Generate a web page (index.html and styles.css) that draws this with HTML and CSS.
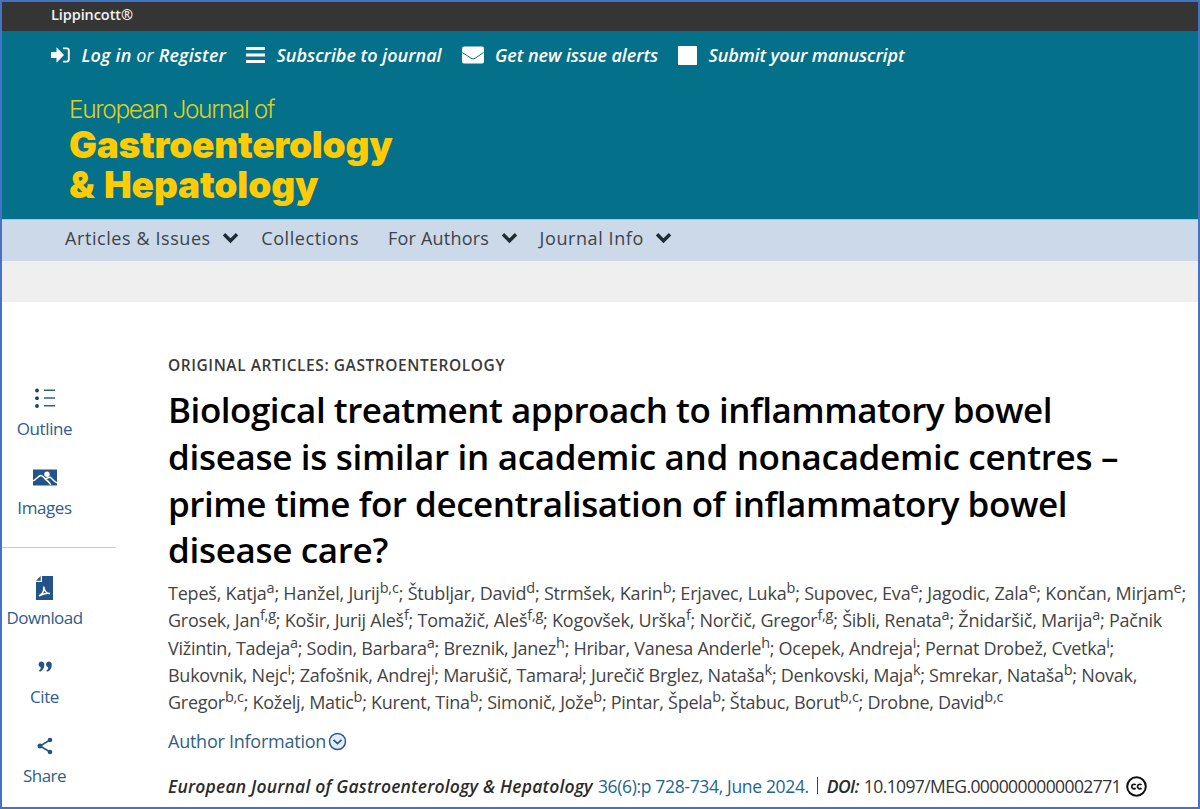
FILE: index.html
```html
<!DOCTYPE html>
<html lang="en">
<head>
    <meta charset="UTF-8">
    <meta name="viewport" content="width=device-width, initial-scale=1.0">
    <title>European Journal of Gastroenterology &amp; Hepatology</title>
    <link rel="stylesheet" href="styles.css">
</head>
<body>
    <div class="page">
        <div class="topbar">Lippincott®</div>

        <header class="masthead">
            <div class="quick-links">
                <a class="quick-link">
                    <svg width="19" height="16" viewBox="0 0 19 16"><path d="M0 5h5.500V.3L13 8l-7.500 7.700V11H0z" fill="#fff"/><path d="M12 1.400h3.800a2 2 0 0 1 2 2v9.200a2 2 0 0 1-2 2H12" fill="none" stroke="#fff" stroke-width="1.900"/></svg>
                    <span class="login"><b>Log in</b> or <b>Register</b></span>
                </a>
                <a class="quick-link">
                    <svg width="19" height="16" viewBox="0 0 19 16"><path d="M0 0h19v3H0zM0 6.500h19v3H0zM0 13h19v3H0z" fill="#fff"/></svg>
                    <b>Subscribe to journal</b>
                </a>
                <a class="quick-link">
                    <svg width="22" height="18" viewBox="0 0 22 18"><rect y=".5" width="22" height="17" rx="2" fill="#fff"/><path d="M.5 6.500L9 12.300q2 1.300 4 0l8.500-5.800" fill="none" stroke="#04708a" stroke-width="1"/></svg>
                    <b class="alerts">Get new issue alerts</b>
                </a>
                <a class="quick-link">
                    <svg width="19" height="19" viewBox="0 0 19 19"><path d="M0 0h19v19H0z" fill="#fff"/></svg>
                    <b class="submit">Submit your manuscript</b>
                </a>
            </div>
            <div class="logo">
                <div class="logo-small">European Journal of</div>
                <div class="logo-big">Gastroenterology</div>
                <div class="logo-big second">&amp; Hepatology</div>
            </div>
        </header>

        <nav class="menu">
            <a class="menu-item">Articles &amp; Issues <svg width="17" height="12" viewBox="0 0 17 12"><path d="M2 2.200l6.500 6.600L15 2.200" fill="none" stroke="#222b33" stroke-width="3.400"/></svg></a>
            <a class="menu-item collections">Collections</a>
            <a class="menu-item for-authors">For Authors <svg width="17" height="12" viewBox="0 0 17 12"><path d="M2 2.200l6.500 6.600L15 2.200" fill="none" stroke="#222b33" stroke-width="3.400"/></svg></a>
            <a class="menu-item">Journal Info <svg width="17" height="12" viewBox="0 0 17 12"><path d="M2 2.200l6.500 6.600L15 2.200" fill="none" stroke="#222b33" stroke-width="3.400"/></svg></a>
        </nav>
        <div class="strip"></div>

        <div class="content">
            <aside class="tools">
                <div class="tool-group">
                    <a class="tool">
                        <svg width="22" height="22" viewBox="0 0 22 22"><g fill="#16406f"><circle cx="3" cy="3.500" r="1.900"/><circle cx="3" cy="11.200" r="1.900"/><circle cx="3" cy="19" r="1.900"/></g><path d="M10 3.300h11M10 11h11M10 18.700h11" stroke="#2c5f93" stroke-width="1.600"/></svg>
                        Outline
                    </a>
                    <a class="tool images">
                        <svg width="24" height="22" viewBox="0 0 24 22"><path d="M0 3.500h24v16H0z" fill="#235489"/><circle cx="14" cy="8.300" r="2.700" fill="#fff"/><path d="M0 14.800c3-.8 5-4.800 7.500-5.300S11.500 13 14 14.500s2 3 4 4.500M12.500 12.800c2.200-.3 2.800-2 4.500-1.500s4 4.500 7 5.500" fill="none" stroke="#fff" stroke-width="1.500"/></svg>
                        Images
                    </a>
                </div>
                <div class="tool-group">
                    <a class="tool download">
                        <svg width="17" height="24" viewBox="0 0 17 24"><path d="M6 0h11v24H0V6h6z" fill="#235489"/><path d="M0 4.700L4.700 0v4.700z" fill="#235489"/><path d="M3 20c3-1.500 5.200-5 4.800-9.500.4 4.500 2.700 7 6.200 7-3.500-1-7 .2-11 2.500z" fill="none" stroke="#fff" stroke-width="1.400"/></svg>
                        Download
                    </a>
                    <a class="tool cite">
                        <svg width="14" height="22" viewBox="0 0 14 22"><g fill="#235489"><path d="M3.200 6.500a3 3 0 0 1 3.100 3.300c0 3.600-1.800 6-4.400 7l-1-1.200c1.200-.8 1.900-1.900 1.900-3.200a3 3 0 0 1 .4-5.900z"/><path d="M10.700 6.500a3 3 0 0 1 3.100 3.300c0 3.600-1.800 6-4.400 7l-1-1.200c1.200-.8 1.900-1.900 1.900-3.200a3 3 0 0 1 .4-5.900z"/></g></svg>
                        Cite
                    </a>
                    <a class="tool share">
                        <svg width="16" height="22" viewBox="0 0 16 22"><path d="M13 6L3 12l10 6" fill="none" stroke="#235489" stroke-width="1.600"/><g fill="#235489"><circle cx="13" cy="6" r="2.300"/><circle cx="3" cy="12" r="2.500"/><circle cx="13" cy="18" r="2.300"/></g></svg>
                        Share
                    </a>
                </div>
            </aside>

            <main class="article">
                <div class="section-name">ORIGINAL ARTICLES: GASTROENTEROLOGY</div>
                <h1>
                    <span class="line title-1">Biological treatment approach to inflammatory bowel</span>
                    <span class="line title-2">disease is similar in academic and nonacademic centres –</span>
                    <span class="line title-3">prime time for decentralisation of inflammatory bowel</span>
                    <span class="line title-4">disease care?</span>
                </h1>
                <div class="authors">
                    <div class="line authors-1">Tepeš, Katja<sup>a</sup>; Hanžel, Jurij<sup>b,c</sup>; Štubljar, David<sup>d</sup>; Strmšek, Karin<sup>b</sup>; Erjavec, Luka<sup>b</sup>; Supovec, Eva<sup>e</sup>; Jagodic, Zala<sup>e</sup>; Končan, Mirjam<sup>e</sup>;</div>
                    <div class="line authors-2">Grosek, Jan<sup>f,g</sup>; Košir, Jurij Aleš<sup>f</sup>; Tomažič, Aleš<sup>f,g</sup>; Kogovšek, Urška<sup>f</sup>; Norčič, Gregor<sup>f,g</sup>; Šibli, Renata<sup>a</sup>; Žnidaršič, Marija<sup>a</sup>; Pačnik</div>
                    <div class="line">Vižintin, Tadeja<sup>a</sup>; Sodin, Barbara<sup>a</sup>; Breznik, Janez<sup>h</sup>; Hribar, Vanesa Anderle<sup>h</sup>; Ocepek, Andreja<sup>i</sup>; Pernat Drobež, Cvetka<sup>i</sup>;</div>
                    <div class="line">Bukovnik, Nejc<sup>i</sup>; Zafošnik, Andrej<sup>i</sup>; Marušič, Tamara<sup>j</sup>; Jurečič Brglez, Nataša<sup>k</sup>; Denkovski, Maja<sup>k</sup>; Smrekar, Nataša<sup>b</sup>; Novak,</div>
                    <div class="line">Gregor<sup>b,c</sup>; Koželj, Matic<sup>b</sup>; Kurent, Tina<sup>b</sup>; Simonič, Jože<sup>b</sup>; Pintar, Špela<sup>b</sup>; Štabuc, Borut<sup>b,c</sup>; Drobne, David<sup>b,c</sup></div>
                </div>
                <a class="author-info">Author Information
                    <svg width="19" height="19" viewBox="0 0 19 19"><circle cx="9.500" cy="9.500" r="8" fill="#e3edf8" stroke="#2a557f" stroke-width="1.500"/><path d="M5.500 7.800l4 3.700 4-3.700" fill="none" stroke="#2a557f" stroke-width="1.700"/></svg>
                </a>
                <div class="citation">
                    <b class="journal">European Journal of Gastroenterology &amp; Hepatology</b>
                    <a class="issue">36(6):p 728-734, June 2024.</a>
                    <span class="bar"></span>
                    <b class="doi-label">DOI:</b>
                    <span class="doi">10.1097/MEG.0000000000002771</span>
                    <svg class="cc" width="21" height="21" viewBox="0 0 21 21"><circle cx="10.500" cy="10.500" r="9.300" fill="#fff" stroke="#111" stroke-width="2"/><path d="M9.700 9a2.300 2.300 0 1 0 0 3.100M15.500 9a2.300 2.300 0 1 0 0 3.100" fill="none" stroke="#111" stroke-width="1.700"/></svg>
                </div>
            </main>
        </div>
    </div>
</body>
</html>
```
FILE: styles.css
```css
* {
    box-sizing: border-box;
}

body {
    margin: 0;
    font-family: 'Open Sans', 'Noto Sans', sans-serif;
    color: #333;
    background: #fff;
}

svg {
    display: block;
    flex: none;
}

b {
    font-weight: 600;
}

.page {
    width: 1200px;
    height: 809px;
    border: 2px solid #4472c4;
    overflow: hidden;
}

.topbar {
    height: 29px;
    padding-left: 49px;
    background: #353535;
    color: #f2f2f2;
    font-size: 14.5px;
    font-weight: 600;
    line-height: 26px;
    letter-spacing: -0.08px;
}

/* Journal header */
.masthead {
    height: 188px;
    padding: 11px 0 0 49px;
    background: #04708a;
}

.quick-links {
    display: flex;
    align-items: center;
    gap: 20px;
    height: 26px;
    color: #fff;
    font-size: 18px;
    font-style: italic;
    line-height: 26px;
    white-space: nowrap;
}

.quick-link {
    display: flex;
    align-items: center;
    gap: 11.5px;
}

.login {
    letter-spacing: 0.14px;
}

.alerts {
    letter-spacing: -0.08px;
}

.submit {
    letter-spacing: -0.11px;
}

.logo {
    padding: 26px 0 0 18px;
    color: #ffcb05;
    font-family: Inter, 'Liberation Sans', sans-serif;
    white-space: nowrap;
}

.logo-small {
    margin-bottom: 1px;
    font-size: 24.5px;
    font-weight: 300;
    line-height: 30px;
    letter-spacing: -1.38px;
    color: #dcce22;
}

.logo-big {
    font-size: 37px;
    font-weight: 900;
    line-height: 40px;
    letter-spacing: -0.25px;
}

.second {
    letter-spacing: -0.1px;
    word-spacing: 2px;
}

/* Main menu */
.menu {
    display: flex;
    height: 42px;
    padding-left: 63px;
    background: #ccd9e8;
    border-top: 1px solid #a5c8d9;
    color: #3b444d;
    font-size: 18px;
    line-height: 36px;
    letter-spacing: 0.58px;
    white-space: nowrap;
}

.menu-item {
    display: flex;
    align-items: center;
    height: 36px;
    gap: 11.5px;
    margin-right: 22px;
}

.collections {
    margin-right: 29px;
}

.for-authors {
    letter-spacing: 0.2px;
}

.strip {
    height: 41px;
    background: #efefef;
}

.content {
    display: flex;
}

/* Left side tools */
.tools {
    width: 114px;
    padding-top: 85px;
    color: #2f5c8c;
    font-size: 17px;
    letter-spacing: -0.4px;
}

.tool-group + .tool-group {
    margin-top: 27px;
    padding-top: 28px;
    border-top: 1px solid #ccc;
}

.tool {
    display: flex;
    flex-direction: column;
    align-items: center;
    width: 85px;
    height: 54px;
    line-height: 24px;
}

.tool + .tool {
    margin-top: 25px;
}

.tool svg {
    height: 22px;
    margin-bottom: 8px;
}

.download,
.share {
    letter-spacing: -0.55px;
}

.download svg {
    height: 24px;
    margin-bottom: 6px;
}

/* Article */
.article {
    padding: 51px 0 0 52px;
    white-space: nowrap;
}

.section-name {
    font-size: 15.5px;
    font-weight: 600;
    line-height: 24px;
    letter-spacing: 0.57px;
    color: #3a3a3a;
}

h1 {
    margin: 10px 0 0;
    color: #000;
    font-size: 35px;
    font-weight: 600;
    line-height: 46.8px;
}

.line {
    display: block;
}

.title-1 {
    letter-spacing: -0.475px;
}

.title-2 {
    letter-spacing: -0.31px;
}

.title-3 {
    letter-spacing: -0.445px;
}

.title-4 {
    letter-spacing: -0.32px;
}

.authors {
    margin-top: 6px;
    font-size: 18px;
    line-height: 27.3px;
    letter-spacing: -0.27px;
    color: #444;
}

.authors-1 {
    letter-spacing: -0.21px;
}

.authors-2 {
    letter-spacing: -0.24px;
}

sup {
    font-size: 14.5px;
    line-height: 0;
    vertical-align: 7px;
}

.author-info {
    display: flex;
    align-items: center;
    gap: 2px;
    margin-top: 11px;
    font-size: 18px;
    line-height: 27px;
    letter-spacing: -0.25px;
    color: #2f6186;
}

.citation {
    display: flex;
    align-items: center;
    margin-top: 17px;
    font-size: 17.5px;
    line-height: 28px;
}

.journal,
.doi-label {
    font-style: italic;
    color: #2b2b2b;
}

.journal {
    letter-spacing: 0.19px;
}

.issue {
    margin-left: 5px;
    letter-spacing: -0.34px;
    color: #1f6591;
}

.bar {
    width: 1px;
    height: 17px;
    margin: 0 9px 0 8px;
    background: #444;
}

.doi-label {
    letter-spacing: -0.58px;
}

.doi {
    margin: 0 5px;
    letter-spacing: -0.6px;
}

.cc {
    margin-top: 2px;
}
```
